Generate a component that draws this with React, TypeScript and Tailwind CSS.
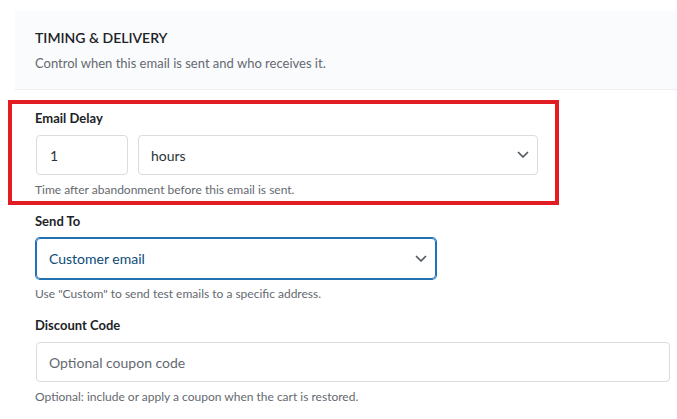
import React from "react";

const Chevron: React.FC = () => (
  <svg width="12" height="8" viewBox="0 0 12 8" className="shrink-0">
    <polyline
      points="1.5,1.5 6,6 10.5,1.5"
      fill="none"
      stroke="#50575e"
      strokeWidth="1.7"
      strokeLinecap="round"
      strokeLinejoin="round"
    />
  </svg>
);

const Label: React.FC<{ children: React.ReactNode }> = ({ children }) => (
  <div className="text-[13px] leading-[20px] font-bold text-[#1d2327] mb-[7px]">
    {children}
  </div>
);

const Help: React.FC<{ children: React.ReactNode }> = ({ children }) => (
  <p className="mt-[6px] text-[12px] leading-[18px] text-[#646970]">{children}</p>
);

export default function App() {
  return (
    <div
      className="relative w-[677px] h-[419px] overflow-hidden bg-white"
      style={{ fontFamily: 'Lato, "Noto Sans", sans-serif' }}
    >
      <div className="ml-[15px] mt-[11px] h-[79px] bg-[#fafbfd] border-b border-[#eeeff1] px-5 pt-[17px]">
        <h2 className="text-[14px] leading-[20px] font-semibold text-[#1d2327] uppercase">
          Timing &amp; Delivery
        </h2>
        <p className="mt-[6px] text-[13px] leading-[18px] text-[#646970]">
          Control when this email is sent and who receives it.
        </p>
      </div>

      <div className="pl-[35px] pt-[18px]">
        <div>
          <Label>Email Delay</Label>
          <div className="flex gap-[10px] pl-px">
            <div className="w-[92px] h-10 border border-[#dcdcde] rounded-[4px] flex items-center px-[13px] text-[14px] text-[#2c3338]">
              1
            </div>
            <div className="w-[400px] h-10 border border-[#dcdcde] rounded-[4px] flex items-center justify-between pl-[12px] pr-[8px] text-[14px] text-[#2c3338]">
              <span>hours</span>
              <Chevron />
            </div>
          </div>
          <Help>Time after abandonment before this email is sent.</Help>
        </div>

        <div className="mt-[12px]">
          <Label>Send To</Label>
          <div className="ml-px w-[400px] h-[41px] border border-[#2271b1] shadow-[0_0_0_1px_#2271b1] rounded-[4px] flex items-center justify-between pl-[12px] pr-[8px] text-[14px] text-[#0a4b78]">
            <span>Customer email</span>
            <Chevron />
          </div>
          <Help>Use "Custom" to send test emails to a specific address.</Help>
        </div>

        <div className="mt-[12px]">
          <Label>Discount Code</Label>
          <div className="ml-px w-[634px] h-10 border border-[#dcdcde] rounded-[4px] flex items-center pl-[12px] text-[14px] text-[#646970]">
            Optional coupon code
          </div>
          <Help>Optional: include or apply a coupon when the cart is restored.</Help>
        </div>
      </div>

      <div className="absolute left-[8px] top-[100px] w-[551px] h-[105px] border-4 border-[#e21c23] pointer-events-none" />
    </div>
  );
}
